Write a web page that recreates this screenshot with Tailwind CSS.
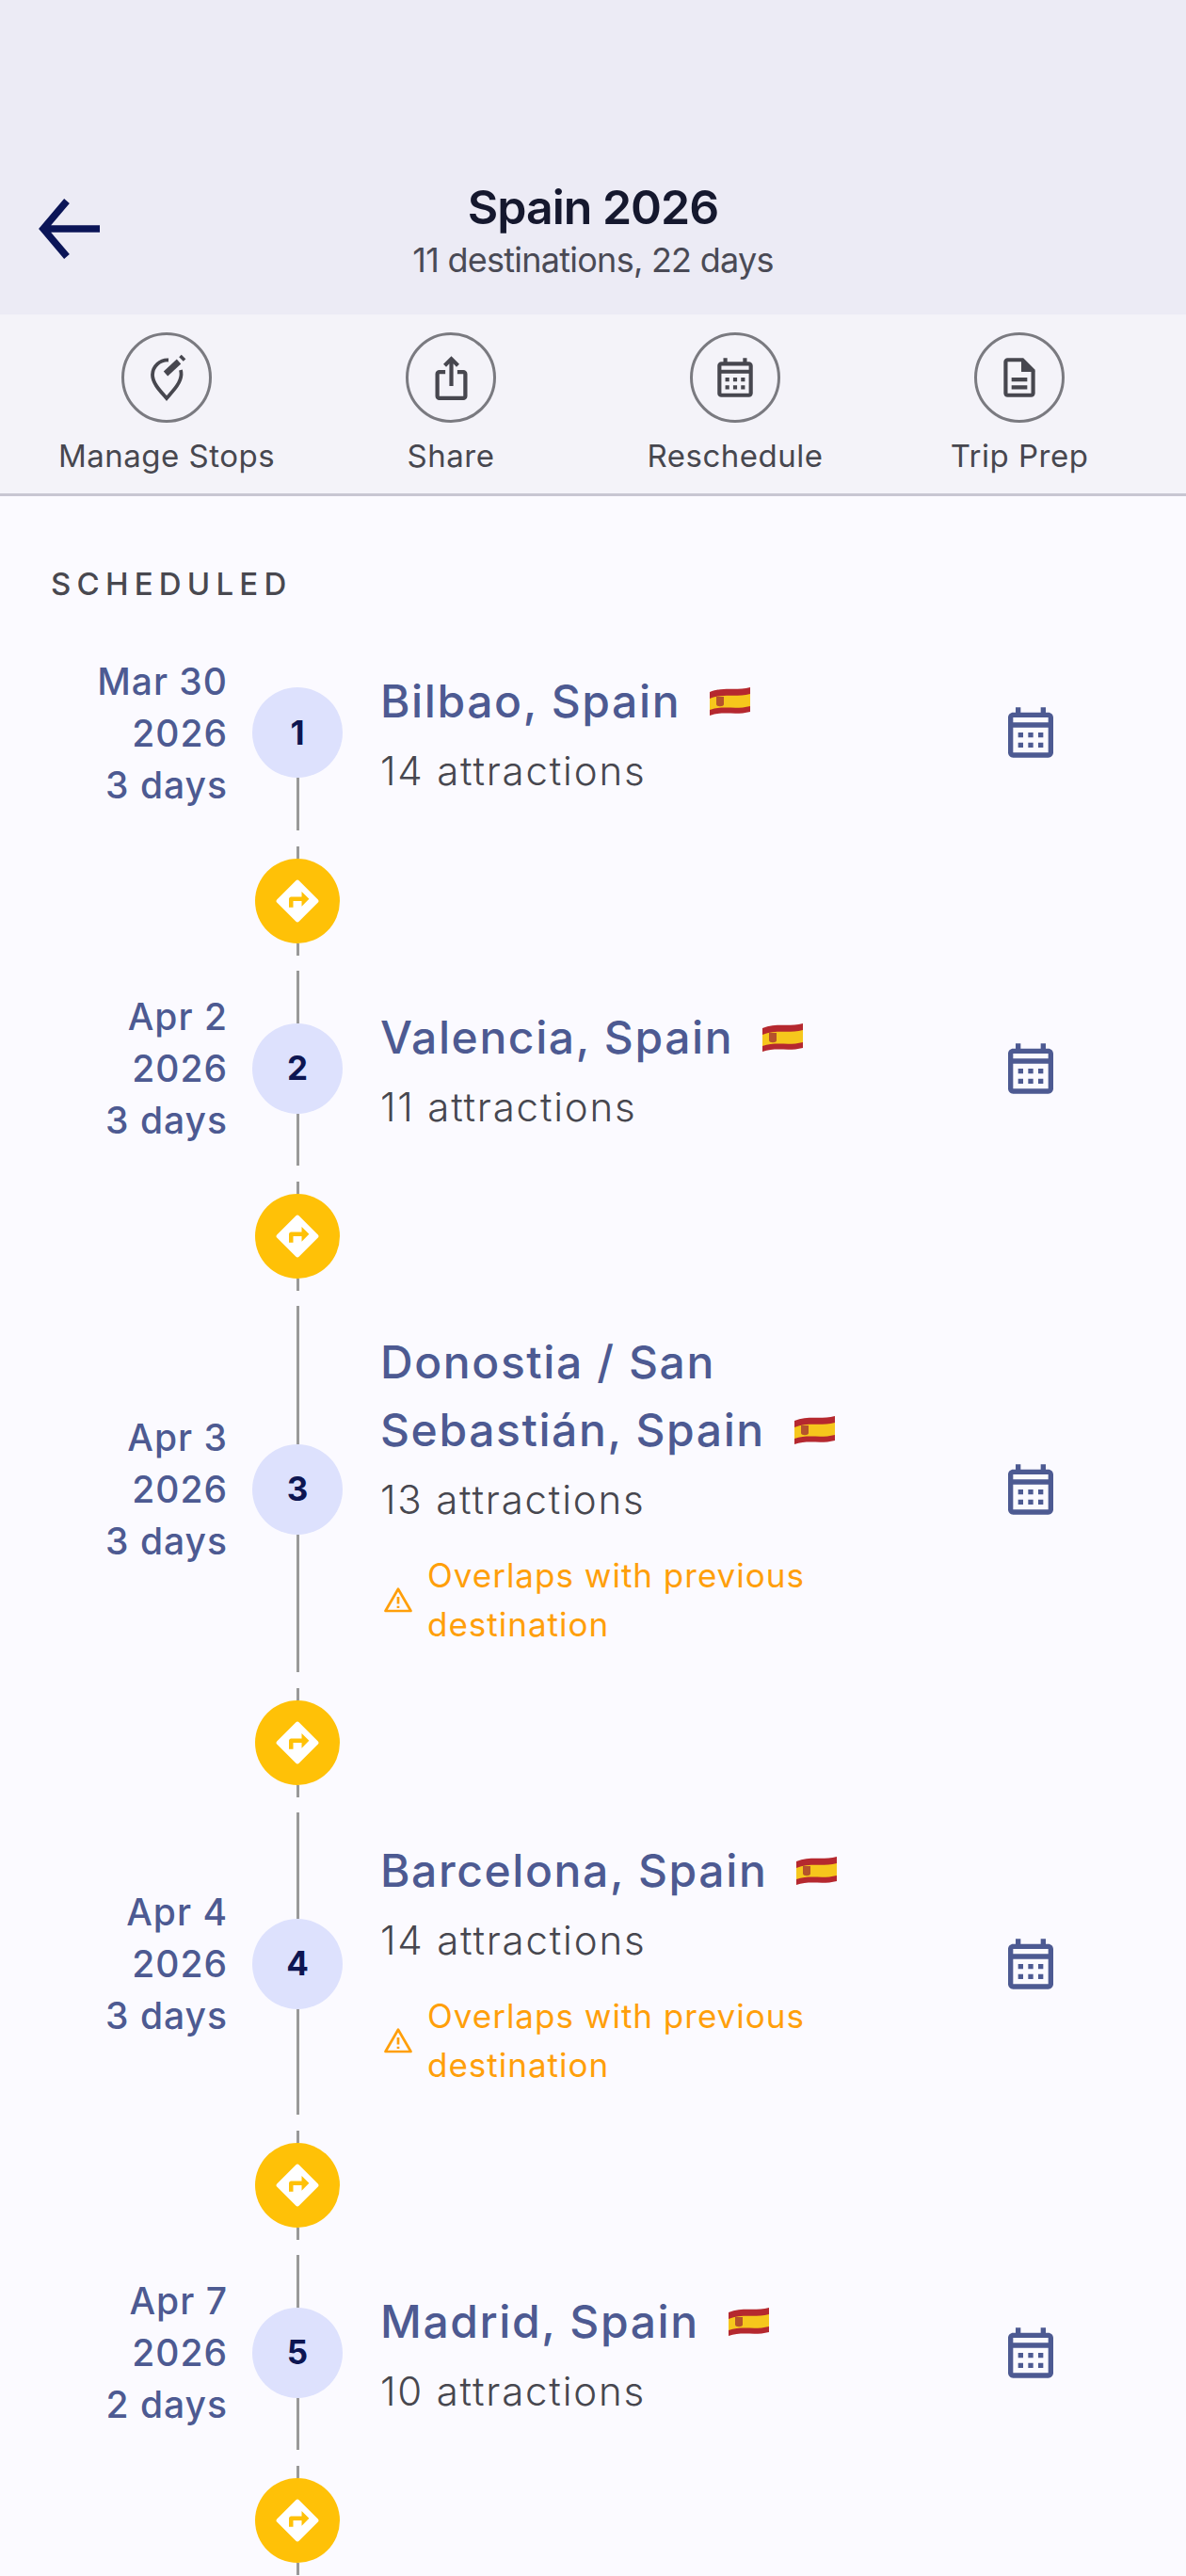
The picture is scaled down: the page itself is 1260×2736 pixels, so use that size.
<!DOCTYPE html>
<html lang="en">

<head>
    <meta charset="UTF-8" />
    <meta name="viewport" content="width=device-width, initial-scale=1.0" />
    <title>Spain 2026</title>
    <script src="https://cdn.jsdelivr.net/npm/@tailwindcss/browser@4"></script>
</head>

<body class="bg-[#fbfaff] font-['Inter',sans-serif]">
    <div class="w-[1260px] h-[2736px] overflow-hidden flex flex-col">
        <!-- Header -->
        <header class="h-[334px] shrink-0 bg-[#ecebf5] flex items-start px-[36px] pt-[188px]">
            <button class="w-[78px] h-[110px] flex items-center text-[#0b1557]">
                <svg class="w-[78px] h-[78px]" viewBox="0 0 78 78" fill="none" stroke="currentColor" stroke-width="7.500">
                    <path d="M70 39H10M35 9.500 10 39l25 29.500" />
                </svg>
            </button>
            <div class="flex-1 text-center">
                <h1 class="text-[50px] leading-[64px] font-semibold text-[#15182e] tracking-[-1px]">Spain 2026</h1>
                <p class="mt-[1px] text-[36px] leading-[46px] text-[#4a4a55] tracking-[-0.75px]">11 destinations, 22 days</p>
            </div>
            <div class="w-[78px]"></div>
        </header>

        <!-- Actions -->
        <nav class="h-[193px] shrink-0 bg-[#f4f3f9] border-b-[3px] border-[#c8c6d2] grid grid-cols-4 px-[26px] pt-[19px]">
            <div class="flex flex-col items-center text-[#47474f]">
                <div class="w-[96px] h-[96px] rounded-full border-[3px] border-[#7a7a80] flex items-center justify-center">
                    <svg class="w-[48px] h-[54px]" viewBox="0 0 48 54" fill="none" stroke="currentColor">
                        <path d="M26 8.500A16 16 0 0 0 9 24c0 9 8 17 15 25 7-8 15-16 15.500-25 0-2 0-3-.5-5" stroke-width="3.800" />
                        <path d="M23 23 37 10" stroke-width="6.500" />
                        <path d="M39.500 7.500 42 5" stroke-width="6.500" />
                    </svg>
                </div>
                <span class="mt-[15px] text-[33px] leading-[40px] tracking-[0.5px]">Manage Stops</span>
            </div>
            <div class="flex flex-col items-center text-[#47474f]">
                <div class="w-[96px] h-[96px] rounded-full border-[3px] border-[#7a7a80] flex items-center justify-center">
                    <svg class="w-[51px] h-[51px]" viewBox="0 0 24 24" fill="currentColor">
                        <path d="M16 5l-1.420 1.420-1.590-1.590V16h-1.980V4.830L9.420 6.420 8 5l4-4 4 4zm4 5v11c0 1.100-.9 2-2 2H6c-1.110 0-2-.9-2-2V10c0-1.110.89-2 2-2h3v2H6v11h12V10h-3V8h3c1.100 0 2 .9 2 2z" />
                    </svg>
                </div>
                <span class="mt-[15px] text-[33px] leading-[40px] tracking-[0.5px]">Share</span>
            </div>
            <div class="flex flex-col items-center text-[#47474f]">
                <div class="w-[96px] h-[96px] rounded-full border-[3px] border-[#7a7a80] flex items-center justify-center">
                    <svg class="w-[50px] h-[50px]" viewBox="0 0 24 24" fill="currentColor">
                        <path d="M19 4h-1V2h-2v2H8V2H6v2H5c-1.100 0-2 .9-2 2v14c0 1.100.9 2 2 2h14c1.100 0 2-.9 2-2V6c0-1.100-.9-2-2-2zm0 16H5V10h14v10zm0-12H5V6h14v2zM9 14H7v-2h2v2zm4 0h-2v-2h2v2zm4 0h-2v-2h2v2zm-8 4H7v-2h2v2zm4 0h-2v-2h2v2zm4 0h-2v-2h2v2z" />
                    </svg>
                </div>
                <span class="mt-[15px] text-[33px] leading-[40px] tracking-[0.5px]">Reschedule</span>
            </div>
            <div class="flex flex-col items-center text-[#47474f]">
                <div class="w-[96px] h-[96px] rounded-full border-[3px] border-[#7a7a80] flex items-center justify-center">
                    <svg class="w-[50px] h-[50px]" viewBox="0 0 24 24" fill="currentColor">
                        <path d="M8 16h8v2H8zm0-4h8v2H8zm6-10H6c-1.100 0-2 .9-2 2v16c0 1.100.89 2 1.990 2H18c1.100 0 2-.9 2-2V8l-6-6zm4 18H6V4h7v5h5v11z" />
                        <path d="M13 3h1l6 6h-7z" />
                    </svg>
                </div>
                <span class="mt-[15px] text-[33px] leading-[40px] tracking-[0.5px]">Trip Prep</span>
            </div>
        </nav>

        <!-- Timeline -->
        <main class="flex-1 flex flex-col">
            <h2 class="pl-[54px] pt-[73px] h-[147px] shrink-0 text-[33px] leading-[40px] font-medium tracking-[6.200px] text-[#48484f]">SCHEDULED</h2>

            <!-- Stop 1 -->
            <section class="h-[208px] shrink-0 flex items-stretch">
                <div class="w-[242px] self-center text-right text-[39px] leading-[55px] font-medium tracking-[1px] text-[#4d5a92]">Mar 30<br />2026<br />3 days</div>
                <div class="ml-[26px] w-[96px] flex flex-col items-center">
                    <div class="flex-1"></div>
                    <div class="w-[96px] h-[96px] rounded-full bg-[#dde1fd] flex items-center justify-center text-[35px] font-bold text-[#0d1652]">1</div>
                    <div class="flex-1 w-[3px] bg-[#999999]"></div>
                </div>
                <div class="ml-[40px] w-[521px] self-center">
                    <h3 class="text-[48px] leading-[72px] font-medium tracking-[1.600px] text-[#4d5a92]">Bilbao, Spain<svg class="inline-block ml-[31px] w-[43px] h-[31px] align-[2px]" viewBox="0 0 43 31"><path d="M0 6C14 0 28 5 43 1v26C28 31 14 26 0 31z" fill="#b5282f" /><path d="M0 13C14 7 28 12 43 8v13C28 25 14 20 0 25z" fill="#f6c71c" /><path d="M7 11h8v8c0 3-8 3-8 0z" fill="#b5532c" /></svg></h3>
                    <p class="mt-[10px] text-[42px] leading-[56px] font-[350] tracking-[1.800px] text-[#47474f]">14 attractions</p>
                </div>
                <div class="ml-[138px] self-center text-[#4d5a92]">
                    <svg class="w-[64px] h-[64px]" viewBox="0 0 24 24" fill="currentColor">
                        <path d="M19 4h-1V2h-2v2H8V2H6v2H5c-1.100 0-2 .9-2 2v14c0 1.100.9 2 2 2h14c1.100 0 2-.9 2-2V6c0-1.100-.9-2-2-2zm0 16H5V10h14v10zm0-12H5V6h14v2zM9 14H7v-2h2v2zm4 0h-2v-2h2v2zm4 0h-2v-2h2v2zm-8 4H7v-2h2v2zm4 0h-2v-2h2v2zm4 0h-2v-2h2v2z" />
                    </svg>
                </div>
            </section>
            <div class="ml-[268px] w-[96px] h-[116px] my-[16.500px] shrink-0 flex flex-col items-center">
                <div class="flex-1 w-[3px] bg-[#999999]"></div>
                <div class="w-[90px] h-[90px] rounded-full bg-[#ffc107] flex items-center justify-center text-white">
                    <svg class="w-[54px] h-[54px]" viewBox="0 0 24 24" fill="currentColor"><path d="M21.710 11.290l-9-9c-.39-.39-1.020-.39-1.410 0l-9 9c-.39.39-.39 1.020 0 1.410l9 9c.39.39 1.020.39 1.410 0l9-9c.39-.38.39-1.010 0-1.410zM14 14.500V12h-4v3H8v-4c0-.55.45-1 1-1h5V7.500l3.500 3.500-3.500 3.500z" /></svg>
                </div>
                <div class="flex-1 w-[3px] bg-[#999999]"></div>
            </div>

            <!-- Stop 2 -->
            <section class="h-[207px] shrink-0 flex items-stretch">
                <div class="w-[242px] self-center text-right text-[39px] leading-[55px] font-medium tracking-[1px] text-[#4d5a92]">Apr 2<br />2026<br />3 days</div>
                <div class="ml-[26px] w-[96px] flex flex-col items-center">
                    <div class="flex-1 w-[3px] bg-[#999999]"></div>
                    <div class="w-[96px] h-[96px] rounded-full bg-[#dde1fd] flex items-center justify-center text-[35px] font-bold text-[#0d1652]">2</div>
                    <div class="flex-1 w-[3px] bg-[#999999]"></div>
                </div>
                <div class="ml-[40px] w-[521px] self-center">
                    <h3 class="text-[48px] leading-[72px] font-medium tracking-[1.600px] text-[#4d5a92]">Valencia, Spain<svg class="inline-block ml-[31px] w-[43px] h-[31px] align-[2px]" viewBox="0 0 43 31"><path d="M0 6C14 0 28 5 43 1v26C28 31 14 26 0 31z" fill="#b5282f" /><path d="M0 13C14 7 28 12 43 8v13C28 25 14 20 0 25z" fill="#f6c71c" /><path d="M7 11h8v8c0 3-8 3-8 0z" fill="#b5532c" /></svg></h3>
                    <p class="mt-[10px] text-[42px] leading-[56px] font-[350] tracking-[1.800px] text-[#47474f]">11 attractions</p>
                </div>
                <div class="ml-[138px] self-center text-[#4d5a92]">
                    <svg class="w-[64px] h-[64px]" viewBox="0 0 24 24" fill="currentColor">
                        <path d="M19 4h-1V2h-2v2H8V2H6v2H5c-1.100 0-2 .9-2 2v14c0 1.100.9 2 2 2h14c1.100 0 2-.9 2-2V6c0-1.100-.9-2-2-2zm0 16H5V10h14v10zm0-12H5V6h14v2zM9 14H7v-2h2v2zm4 0h-2v-2h2v2zm4 0h-2v-2h2v2zm-8 4H7v-2h2v2zm4 0h-2v-2h2v2zm4 0h-2v-2h2v2z" />
                    </svg>
                </div>
            </section>
            <div class="ml-[268px] w-[96px] h-[116px] my-[16.500px] shrink-0 flex flex-col items-center">
                <div class="flex-1 w-[3px] bg-[#999999]"></div>
                <div class="w-[90px] h-[90px] rounded-full bg-[#ffc107] flex items-center justify-center text-white">
                    <svg class="w-[54px] h-[54px]" viewBox="0 0 24 24" fill="currentColor"><path d="M21.710 11.290l-9-9c-.39-.39-1.020-.39-1.410 0l-9 9c-.39.39-.39 1.020 0 1.410l9 9c.39.39 1.020.39 1.410 0l9-9c.39-.38.39-1.010 0-1.410zM14 14.500V12h-4v3H8v-4c0-.55.45-1 1-1h5V7.500l3.500 3.500-3.500 3.500z" /></svg>
                </div>
                <div class="flex-1 w-[3px] bg-[#999999]"></div>
            </div>

            <!-- Stop 3 -->
            <section class="h-[389px] shrink-0 flex items-stretch">
                <div class="w-[242px] self-center text-right text-[39px] leading-[55px] font-medium tracking-[1px] text-[#4d5a92]">Apr 3<br />2026<br />3 days</div>
                <div class="ml-[26px] w-[96px] flex flex-col items-center">
                    <div class="flex-1 w-[3px] bg-[#999999]"></div>
                    <div class="w-[96px] h-[96px] rounded-full bg-[#dde1fd] flex items-center justify-center text-[35px] font-bold text-[#0d1652]">3</div>
                    <div class="flex-1 w-[3px] bg-[#999999]"></div>
                </div>
                <div class="ml-[40px] w-[521px] self-center">
                    <h3 class="text-[48px] leading-[72px] font-medium tracking-[1.600px] text-[#4d5a92]">Donostia / San Sebastián, Spain<svg class="inline-block ml-[31px] w-[43px] h-[31px] align-[2px]" viewBox="0 0 43 31"><path d="M0 6C14 0 28 5 43 1v26C28 31 14 26 0 31z" fill="#b5282f" /><path d="M0 13C14 7 28 12 43 8v13C28 25 14 20 0 25z" fill="#f6c71c" /><path d="M7 11h8v8c0 3-8 3-8 0z" fill="#b5532c" /></svg></h3>
                    <p class="mt-[10px] text-[42px] leading-[56px] font-[350] tracking-[1.800px] text-[#47474f]">13 attractions</p>
                    <div class="mt-[26px] mb-[1px] ml-[1px] flex items-center gap-[13px] text-[#ff9f0a]">
                        <svg class="w-[36px] h-[36px] shrink-0" viewBox="0 0 24 24" fill="none" stroke="currentColor" stroke-width="1.800" stroke-linejoin="round"><path d="M12 4.500 21 20H3z" /><path d="M12 10v5M12 16.500v1.500" /></svg>
                        <p class="text-[35px] leading-[52px] tracking-[1px]">Overlaps with previous destination</p>
                    </div>
                </div>
                <div class="ml-[138px] self-center text-[#4d5a92]">
                    <svg class="w-[64px] h-[64px]" viewBox="0 0 24 24" fill="currentColor">
                        <path d="M19 4h-1V2h-2v2H8V2H6v2H5c-1.100 0-2 .9-2 2v14c0 1.100.9 2 2 2h14c1.100 0 2-.9 2-2V6c0-1.100-.9-2-2-2zm0 16H5V10h14v10zm0-12H5V6h14v2zM9 14H7v-2h2v2zm4 0h-2v-2h2v2zm4 0h-2v-2h2v2zm-8 4H7v-2h2v2zm4 0h-2v-2h2v2zm4 0h-2v-2h2v2z" />
                    </svg>
                </div>
            </section>
            <div class="ml-[268px] w-[96px] h-[116px] my-[16.500px] shrink-0 flex flex-col items-center">
                <div class="flex-1 w-[3px] bg-[#999999]"></div>
                <div class="w-[90px] h-[90px] rounded-full bg-[#ffc107] flex items-center justify-center text-white">
                    <svg class="w-[54px] h-[54px]" viewBox="0 0 24 24" fill="currentColor"><path d="M21.710 11.290l-9-9c-.39-.39-1.020-.39-1.410 0l-9 9c-.39.39-.39 1.020 0 1.410l9 9c.39.39 1.020.39 1.410 0l9-9c.39-.38.39-1.010 0-1.410zM14 14.500V12h-4v3H8v-4c0-.55.45-1 1-1h5V7.500l3.500 3.500-3.500 3.500z" /></svg>
                </div>
                <div class="flex-1 w-[3px] bg-[#999999]"></div>
            </div>

            <!-- Stop 4 -->
            <section class="h-[321px] shrink-0 flex items-stretch">
                <div class="w-[242px] self-center text-right text-[39px] leading-[55px] font-medium tracking-[1px] text-[#4d5a92]">Apr 4<br />2026<br />3 days</div>
                <div class="ml-[26px] w-[96px] flex flex-col items-center">
                    <div class="flex-1 w-[3px] bg-[#999999]"></div>
                    <div class="w-[96px] h-[96px] rounded-full bg-[#dde1fd] flex items-center justify-center text-[35px] font-bold text-[#0d1652]">4</div>
                    <div class="flex-1 w-[3px] bg-[#999999]"></div>
                </div>
                <div class="ml-[40px] w-[521px] self-center">
                    <h3 class="text-[48px] leading-[72px] font-medium tracking-[1.600px] text-[#4d5a92]">Barcelona, Spain<svg class="inline-block ml-[31px] w-[43px] h-[31px] align-[2px]" viewBox="0 0 43 31"><path d="M0 6C14 0 28 5 43 1v26C28 31 14 26 0 31z" fill="#b5282f" /><path d="M0 13C14 7 28 12 43 8v13C28 25 14 20 0 25z" fill="#f6c71c" /><path d="M7 11h8v8c0 3-8 3-8 0z" fill="#b5532c" /></svg></h3>
                    <p class="mt-[10px] text-[42px] leading-[56px] font-[350] tracking-[1.800px] text-[#47474f]">14 attractions</p>
                    <div class="mt-[26px] mb-[1px] ml-[1px] flex items-center gap-[13px] text-[#ff9f0a]">
                        <svg class="w-[36px] h-[36px] shrink-0" viewBox="0 0 24 24" fill="none" stroke="currentColor" stroke-width="1.800" stroke-linejoin="round"><path d="M12 4.500 21 20H3z" /><path d="M12 10v5M12 16.500v1.500" /></svg>
                        <p class="text-[35px] leading-[52px] tracking-[1px]">Overlaps with previous destination</p>
                    </div>
                </div>
                <div class="ml-[138px] self-center text-[#4d5a92]">
                    <svg class="w-[64px] h-[64px]" viewBox="0 0 24 24" fill="currentColor">
                        <path d="M19 4h-1V2h-2v2H8V2H6v2H5c-1.100 0-2 .9-2 2v14c0 1.100.9 2 2 2h14c1.100 0 2-.9 2-2V6c0-1.100-.9-2-2-2zm0 16H5V10h14v10zm0-12H5V6h14v2zM9 14H7v-2h2v2zm4 0h-2v-2h2v2zm4 0h-2v-2h2v2zm-8 4H7v-2h2v2zm4 0h-2v-2h2v2zm4 0h-2v-2h2v2z" />
                    </svg>
                </div>
            </section>
            <div class="ml-[268px] w-[96px] h-[116px] my-[16.500px] shrink-0 flex flex-col items-center">
                <div class="flex-1 w-[3px] bg-[#999999]"></div>
                <div class="w-[90px] h-[90px] rounded-full bg-[#ffc107] flex items-center justify-center text-white">
                    <svg class="w-[54px] h-[54px]" viewBox="0 0 24 24" fill="currentColor"><path d="M21.710 11.290l-9-9c-.39-.39-1.020-.39-1.410 0l-9 9c-.39.39-.39 1.020 0 1.410l9 9c.39.39 1.020.39 1.410 0l9-9c.39-.38.39-1.010 0-1.410zM14 14.500V12h-4v3H8v-4c0-.55.45-1 1-1h5V7.500l3.500 3.500-3.500 3.500z" /></svg>
                </div>
                <div class="flex-1 w-[3px] bg-[#999999]"></div>
            </div>

            <!-- Stop 5 -->
            <section class="h-[207px] shrink-0 flex items-stretch">
                <div class="w-[242px] self-center text-right text-[39px] leading-[55px] font-medium tracking-[1px] text-[#4d5a92]">Apr 7<br />2026<br />2 days</div>
                <div class="ml-[26px] w-[96px] flex flex-col items-center">
                    <div class="flex-1 w-[3px] bg-[#999999]"></div>
                    <div class="w-[96px] h-[96px] rounded-full bg-[#dde1fd] flex items-center justify-center text-[35px] font-bold text-[#0d1652]">5</div>
                    <div class="flex-1 w-[3px] bg-[#999999]"></div>
                </div>
                <div class="ml-[40px] w-[521px] self-center">
                    <h3 class="text-[48px] leading-[72px] font-medium tracking-[1.600px] text-[#4d5a92]">Madrid, Spain<svg class="inline-block ml-[31px] w-[43px] h-[31px] align-[2px]" viewBox="0 0 43 31"><path d="M0 6C14 0 28 5 43 1v26C28 31 14 26 0 31z" fill="#b5282f" /><path d="M0 13C14 7 28 12 43 8v13C28 25 14 20 0 25z" fill="#f6c71c" /><path d="M7 11h8v8c0 3-8 3-8 0z" fill="#b5532c" /></svg></h3>
                    <p class="mt-[10px] text-[42px] leading-[56px] font-[350] tracking-[1.800px] text-[#47474f]">10 attractions</p>
                </div>
                <div class="ml-[138px] self-center text-[#4d5a92]">
                    <svg class="w-[64px] h-[64px]" viewBox="0 0 24 24" fill="currentColor">
                        <path d="M19 4h-1V2h-2v2H8V2H6v2H5c-1.100 0-2 .9-2 2v14c0 1.100.9 2 2 2h14c1.100 0 2-.9 2-2V6c0-1.100-.9-2-2-2zm0 16H5V10h14v10zm0-12H5V6h14v2zM9 14H7v-2h2v2zm4 0h-2v-2h2v2zm4 0h-2v-2h2v2zm-8 4H7v-2h2v2zm4 0h-2v-2h2v2zm4 0h-2v-2h2v2z" />
                    </svg>
                </div>
            </section>
            <div class="ml-[268px] w-[96px] h-[116px] my-[16.500px] shrink-0 flex flex-col items-center">
                <div class="flex-1 w-[3px] bg-[#999999]"></div>
                <div class="w-[90px] h-[90px] rounded-full bg-[#ffc107] flex items-center justify-center text-white">
                    <svg class="w-[54px] h-[54px]" viewBox="0 0 24 24" fill="currentColor"><path d="M21.710 11.290l-9-9c-.39-.39-1.020-.39-1.410 0l-9 9c-.39.39-.39 1.020 0 1.410l9 9c.39.39 1.020.39 1.410 0l9-9c.39-.38.39-1.010 0-1.410zM14 14.500V12h-4v3H8v-4c0-.55.45-1 1-1h5V7.500l3.500 3.500-3.500 3.500z" /></svg>
                </div>
                <div class="flex-1 w-[3px] bg-[#999999]"></div>
            </div>
        </main>
    </div>
</body>

</html>
